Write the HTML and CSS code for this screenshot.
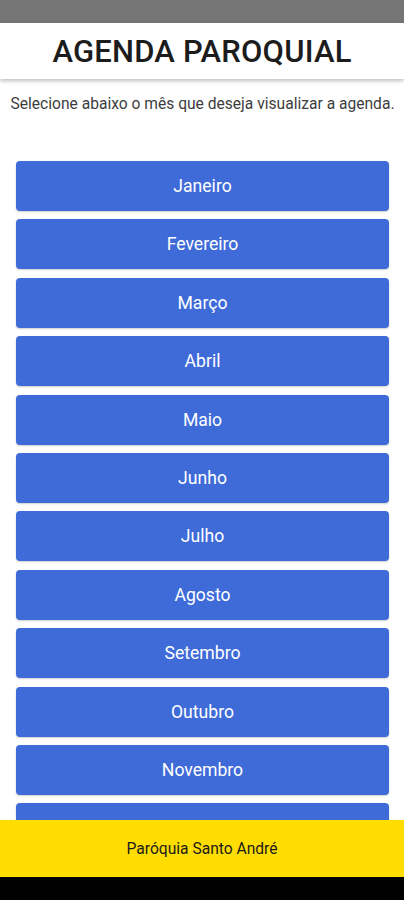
FILE: index.html
```html
<!DOCTYPE html>
<html lang="pt">
<head>
<meta charset="utf-8">
<title>Agenda Paroquial</title>
<link rel="stylesheet" href="styles.css">
</head>
<body>
<div class="app">
  <div class="status-bar"></div>
  <header class="header"><h1 class="title">AGENDA PAROQUIAL</h1></header>
  <main class="content">
    <p class="subtitle">Selecione abaixo o mês que deseja visualizar a agenda.</p>
    <div class="months">
      <button class="month">Janeiro</button>
      <button class="month">Fevereiro</button>
      <button class="month">Março</button>
      <button class="month">Abril</button>
      <button class="month">Maio</button>
      <button class="month">Junho</button>
      <button class="month">Julho</button>
      <button class="month">Agosto</button>
      <button class="month">Setembro</button>
      <button class="month">Outubro</button>
      <button class="month">Novembro</button>
      <button class="month">Dezembro</button>
    </div>
  </main>
  <footer class="footer">Paróquia Santo André</footer>
  <div class="nav-bar"></div>
</div>
</body>
</html>
```
FILE: styles.css
```css
* { box-sizing: border-box; }
html, body { margin: 0; padding: 0; }
body {
  font-family: Roboto, "Noto Sans", sans-serif;
  background: #fff;
}
.app {
  height: 900px;
  display: flex;
  flex-direction: column;
  overflow: hidden;
}
.status-bar {
  height: 23px;
  flex: none;
  background: #757575;
}
.header {
  height: 56px;
  flex: none;
  background: #fff;
  display: flex;
  align-items: center;
  justify-content: center;
  box-shadow: 0 2px 4px rgba(0,0,0,0.25);
  position: relative;
  z-index: 1;
}
.title {
  margin: 0;
  font-size: 31px;
  font-weight: 500;
  color: #1c1c1c;
  letter-spacing: 0.2px;
}
.content {
  flex: 1;
  overflow: hidden;
  padding: 15px 15px 0 16px;
}
.subtitle {
  margin: 0 -14px;
  text-align: center;
  font-size: 15.6px;
  color: #3d3d3d;
  line-height: 20px;
  white-space: nowrap;
}
.months {
  margin-top: 47px;
  display: flex;
  flex-direction: column;
  gap: 8.4px;
}
.month {
  height: 50px;
  flex: none;
  width: 100%;
  border: none;
  border-radius: 4px;
  background: #3f6bd9;
  color: #fff;
  font-family: Roboto, "Noto Sans", sans-serif;
  font-size: 17.6px;
  box-shadow: 0 1px 2px rgba(0,0,0,0.2);
}
.footer {
  height: 57px;
  flex: none;
  background: #ffdd00;
  display: flex;
  align-items: center;
  justify-content: center;
  font-size: 15.6px;
  color: #1a1a1a;
}
.nav-bar {
  height: 23px;
  flex: none;
  background: #000;
}
```
